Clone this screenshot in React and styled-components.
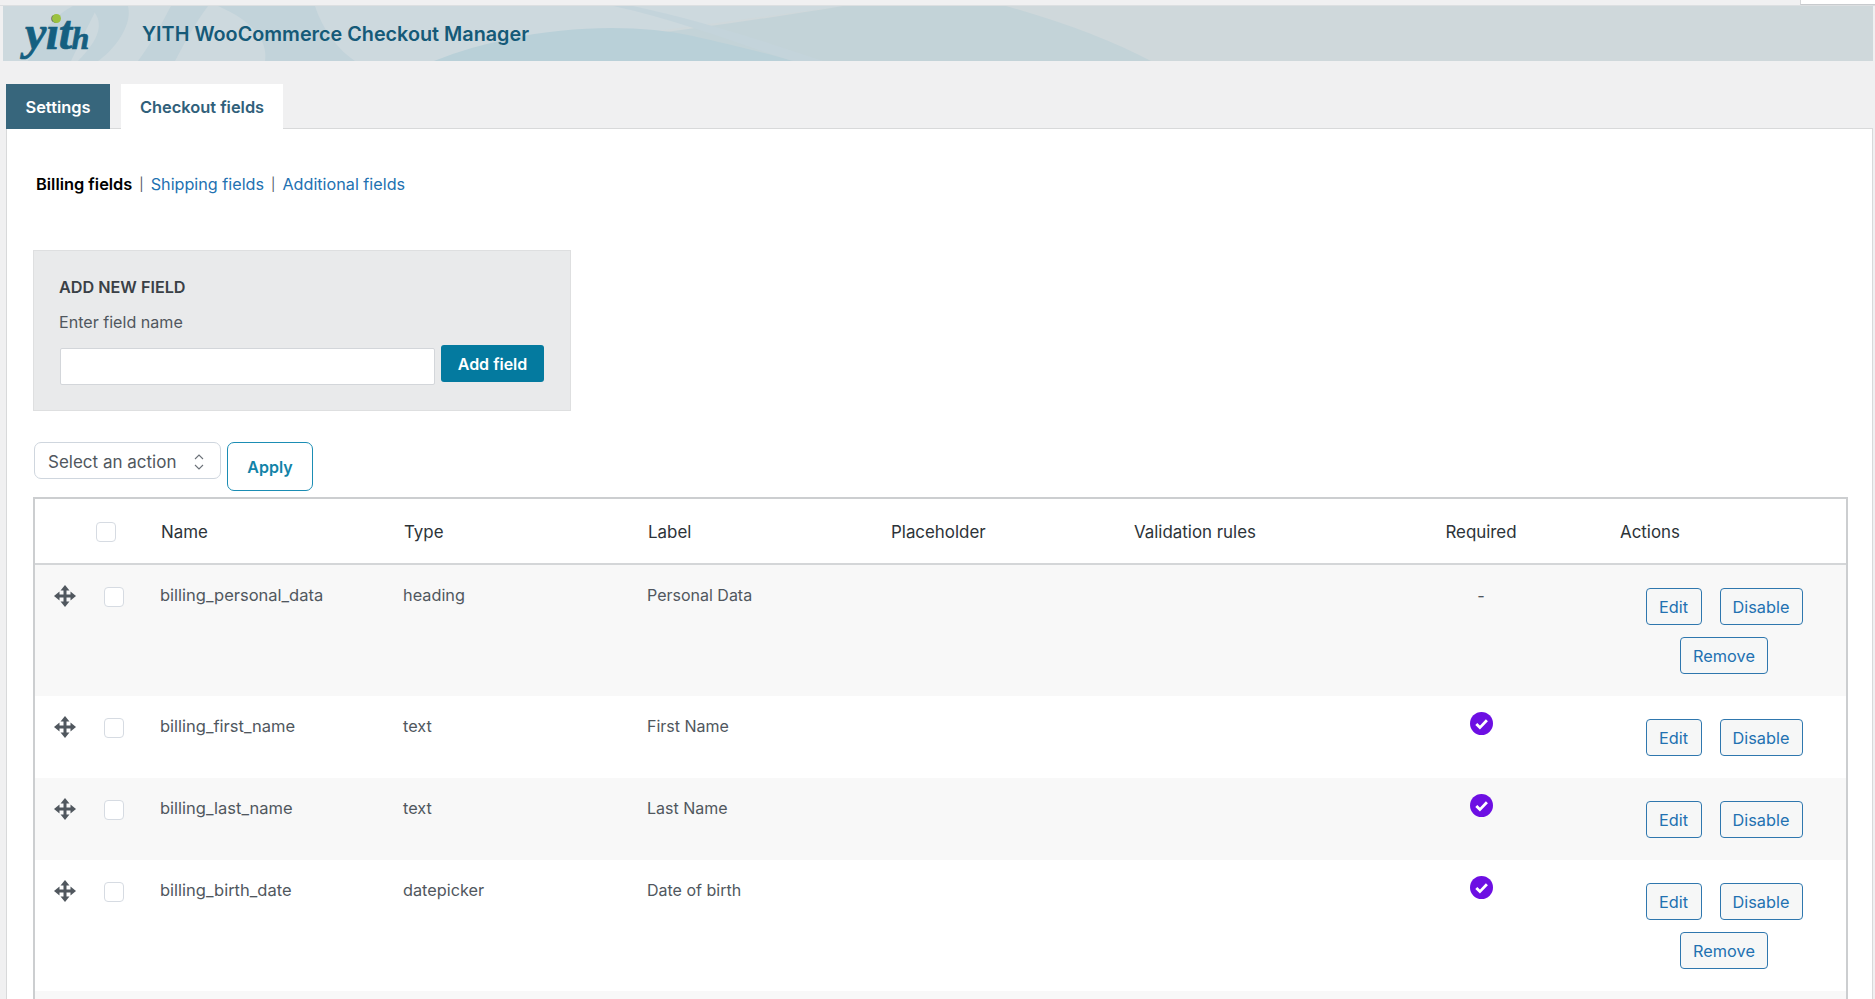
import React from 'react'
import styled, { createGlobalStyle } from 'styled-components'

const GlobalStyle = createGlobalStyle`
  html, body {
    margin: 0;
    height: 999px;
    overflow: hidden;
    background: #f0f0f1;
    font-family: Inter, "Noto Sans", "Liberation Sans", sans-serif;
    font-size: 16.3px;
    color: #50575e;
  }
  * { box-sizing: border-box; }
`

const TopStrip = styled.div`
  height: 6px;
  display: flex;
  justify-content: flex-end;
  border-bottom: 1px solid #dcdfe1;
`

const ScreenOptions = styled.div`
  width: 75px;
  height: 5px;
  background: #fff;
  border-left: 1px solid #d5d7d9;
  border-bottom: 1px solid #c8cbce;
`

const Banner = styled.header`
  position: relative;
  height: 55px;
  margin: 0 2px 0 3px;
  padding-left: 22px;
  display: flex;
  align-items: center;
  overflow: hidden;
  background: #cfd8db;
`

const BannerArt = styled.svg`
  position: absolute;
  inset: 0;
  width: 100%;
  height: 100%;
`

const Logo = styled.div`
  position: relative;
  width: 117px;
  height: 55px;
  padding-top: 3px;
  font-family: "Liberation Serif", serif;
  font-style: italic;
  font-weight: 700;
  font-size: 48px;
  line-height: 48px;
  letter-spacing: -0.5px;
  color: #155f80;
  -webkit-text-stroke: 0.7px #155f80;
`

const LogoSmall = styled.span`
  font-size: 32px;
`

const LogoDot = styled.span`
  position: absolute;
  left: 27px;
  top: 8px;
  width: 9px;
  height: 9px;
  border-radius: 50%;
  background: #9cc13f;
`

const BannerTitle = styled.h1`
  position: relative;
  margin: 0;
  font-size: 19.8px;
  font-weight: 600;
  color: #155a78;
`

const Tabs = styled.nav`
  position: relative;
  z-index: 1;
  margin-top: 23px;
  margin-bottom: -1px;
  padding-left: 6px;
  display: flex;
  gap: 11px;
`

const Tab = styled.a`
  width: ${p => p.$width}px;
  height: 45px;
  display: flex;
  align-items: center;
  justify-content: center;
  font-size: 16.4px;
  font-weight: 600;
  color: ${p => (p.$active ? '#fff' : '#30607a')};
  background: ${p => (p.$active ? '#37667c' : '#fff')};
`

const Panel = styled.main`
  margin: 0 2px 0 6px;
  padding: 44px 24px 0 26px;
  background: #fff;
  border: 1px solid #d8d9da;
  border-bottom: 0;
`

const SubNav = styled.div`
  height: 22px;
  padding-left: 3px;
  display: flex;
  align-items: center;
  gap: 7px;
  font-size: 16.2px;
  line-height: 22px;
`

const SubLink = styled.a`
  color: ${p => (p.$current ? '#000' : '#2271b1')};
  font-weight: ${p => (p.$current ? 600 : 400)};
  font-size: ${p => (p.$current ? '16.4px' : 'inherit')};
`

const Sep = styled.span`
  font-size: 13px;
  color: #50575e;
`

const AddBox = styled.section`
  width: 538px;
  height: 161px;
  margin-top: 55px;
  padding: 26px 0 0 25px;
  background: #e9eaeb;
  border: 1px solid #dedfe0;
`

const AddTitle = styled.h3`
  margin: 0;
  font-size: 16.2px;
  line-height: 20px;
  font-weight: 600;
  color: #3a4046;
`

const AddLabel = styled.div`
  margin-top: 15px;
  font-size: 16.1px;
  line-height: 20px;
`

const AddRow = styled.div`
  margin-top: 13px;
  display: flex;
  align-items: flex-start;
  gap: 6px;
`

const FieldInput = styled.input`
  width: 375px;
  height: 37px;
  margin: 3px 0 0 1px;
  background: #fff;
  border: 1px solid #d3d6da;
  border-radius: 2px;
`

const AddButton = styled.button`
  width: 103px;
  height: 37px;
  border: 0;
  border-radius: 3px;
  background: #047a9f;
  color: #fff;
  font: 600 16px Inter, sans-serif;
`

const Toolbar = styled.div`
  margin-top: 31px;
  display: flex;
  align-items: flex-start;
  gap: 6px;
`

const ActionSelect = styled.div`
  width: 187px;
  height: 37px;
  margin-left: 1px;
  padding: 2px 16px 0 13px;
  display: flex;
  align-items: center;
  justify-content: space-between;
  font-size: 17px;
  background: #fff;
  border: 1px solid #cfd6de;
  border-radius: 7px;
`

const ApplyButton = styled.button`
  width: 86px;
  height: 49px;
  padding-top: 2px;
  background: #fff;
  border: 1.5px solid #1b8db4;
  border-radius: 7px;
  color: #1283a8;
  font: 600 16px Inter, sans-serif;
`

const Table = styled.div`
  margin-top: 6px;
  width: 1815px;
  border: 2px solid #ccced0;
  border-bottom: 0;
  background: #fff;
`

const COLUMNS = '60px 65px 243px 244px 243px 243px 243px 210px 1fr'

const HeadRow = styled.div`
  height: 66px;
  padding-top: 2px;
  display: grid;
  grid-template-columns: ${COLUMNS};
  align-items: center;
  border-bottom: 2px solid #d4d6d8;
  font-size: 16.9px;
  color: #2c3338;
`

const HeadCell = styled.div`
  padding-left: ${p => (p.$center ? 0 : p.$pad || 1)}px;
  text-align: ${p => (p.$center ? 'center' : 'left')};
`

const Row = styled.div`
  display: grid;
  grid-template-columns: ${COLUMNS};
  align-items: start;
  min-height: ${p => (p.$filler ? '30px' : 'auto')};
  background: ${p => (p.$striped ? '#f8f8f8' : '#fff')};
`

const Cell = styled.div`
  padding-top: 20px;
  line-height: 20px;
`

const NameCell = styled(Cell)`
  font-size: 16.5px;
`

const LabelCell = styled(Cell)`
  font-size: 16px;
`

const DragCell = styled.div`
  padding-top: 20px;
  display: flex;
  justify-content: center;
`

const CheckCell = styled.div`
  padding: 22px 0 0 9px;
`

const Box = styled.span`
  display: block;
  width: 20px;
  height: 20px;
  background: #fff;
  border: 1.5px solid #d6dbe2;
  border-radius: 4px;
`

const RequiredCell = styled.div`
  padding-top: 16px;
  display: flex;
  justify-content: center;
`

const Dash = styled.span`
  padding-top: 5px;
  line-height: 20px;
`

const ActionsCell = styled.div`
  padding: 23px 0 22px 16px;
  display: flex;
  flex-wrap: wrap;
  justify-content: center;
  gap: 12px 18px;
`

const RowButton = styled.button`
  height: 37px;
  width: ${p => p.$width}px;
  padding: 0;
  background: #f6f7f7;
  border: 1.5px solid #2f77ae;
  border-radius: 4px;
  color: #2271b1;
  font: 400 16.3px Inter, sans-serif;
`

const MoveIcon = () => (
  <svg width="22" height="22" viewBox="0 0 22 22" fill="#50575e">
    <rect x="9.5" y="3" width="3" height="16" />
    <rect x="3" y="9.5" width="16" height="3" />
    <polygon points="11,0 15.5,5.5 6.5,5.5" />
    <polygon points="11,22 15.5,16.5 6.5,16.5" />
    <polygon points="0,11 5.5,6.5 5.5,15.5" />
    <polygon points="22,11 16.5,6.5 16.5,15.5" />
  </svg>
)

const RequiredIcon = () => (
  <svg width="23" height="23" viewBox="0 0 23 23">
    <circle cx="11.5" cy="11.5" r="11.5" fill="#6d0fe3" />
    <path d="M6.3 12l3.6 3.6 7-7.4" fill="none" stroke="#fff" strokeWidth="2.8" />
  </svg>
)

const UpDownIcon = () => (
  <svg width="10" height="16" viewBox="0 0 10 16" fill="none" stroke="#6b7178" strokeWidth="1.1">
    <path d="M1 5l4-4 4 4" />
    <path d="M1 11l4 4 4-4" />
  </svg>
)

const FIELDS = [
  { name: 'billing_personal_data', type: 'heading', label: 'Personal Data', required: false, removable: true },
  { name: 'billing_first_name', type: 'text', label: 'First Name', required: true },
  { name: 'billing_last_name', type: 'text', label: 'Last Name', required: true },
  { name: 'billing_birth_date', type: 'datepicker', label: 'Date of birth', required: true, removable: true },
]

const App = () => (
  <>
    <GlobalStyle />
    <TopStrip>
      <ScreenOptions />
    </TopStrip>
    <Banner>
      <BannerArt viewBox="0 0 1870 55" preserveAspectRatio="none">
        <rect width="1870" height="55" fill="#cfd8db" />
        <path d="M0 0H840L431 55H0Z" fill="#cdd9de" />
        <path d="M840 0H1003C1060 16 1110 35 1148 55H431C560 40 720 20 840 0Z" fill="#c3d3d8" />
        <path d="M431 55C520 20 620 15 690 30C720 37 760 46 790 55Z" fill="#b9d0d8" />
        <path d="M630 0C700 15 760 35 820 55H790C740 40 680 15 610 0Z" fill="#c4d4db" />
        <path d="M25 55C35 30 50 10 70 0H95C85 20 75 40 68 55Z" fill="#c2d3da" />
        <path d="M85 0H125C130 20 110 45 95 55H75C95 35 105 15 85 0Z" fill="#c2d3da" />
        <path d="M135 55C150 35 160 15 168 0H205C190 20 180 40 172 55Z" fill="#c2d3da" />
        <path d="M215 0H312C318 18 330 40 352 55H262C265 35 250 15 215 0Z" fill="#c2d3da" />
      </BannerArt>
      <Logo>
        yit<LogoSmall>h</LogoSmall>
        <LogoDot />
      </Logo>
      <BannerTitle>YITH WooCommerce Checkout Manager</BannerTitle>
    </Banner>
    <Tabs>
      <Tab $active $width={104}>Settings</Tab>
      <Tab $width={162}>Checkout fields</Tab>
    </Tabs>
    <Panel>
      <SubNav>
        <SubLink $current>Billing fields</SubLink>
        <Sep>|</Sep>
        <SubLink>Shipping fields</SubLink>
        <Sep>|</Sep>
        <SubLink>Additional fields</SubLink>
      </SubNav>
      <AddBox>
        <AddTitle>ADD NEW FIELD</AddTitle>
        <AddLabel>Enter field name</AddLabel>
        <AddRow>
          <FieldInput />
          <AddButton>Add field</AddButton>
        </AddRow>
      </AddBox>
      <Toolbar>
        <ActionSelect>
          Select an action
          <UpDownIcon />
        </ActionSelect>
        <ApplyButton>Apply</ApplyButton>
      </Toolbar>
      <Table>
        <HeadRow>
          <span />
          <HeadCell><Box /></HeadCell>
          <HeadCell>Name</HeadCell>
          <HeadCell>Type</HeadCell>
          <HeadCell>Label</HeadCell>
          <HeadCell>Placeholder</HeadCell>
          <HeadCell>Validation rules</HeadCell>
          <HeadCell $center>Required</HeadCell>
          <HeadCell $pad={34}>Actions</HeadCell>
        </HeadRow>
        {FIELDS.map((field, i) => (
          <Row key={field.name} $striped={i % 2 === 0}>
            <DragCell><MoveIcon /></DragCell>
            <CheckCell><Box /></CheckCell>
            <NameCell>{field.name}</NameCell>
            <Cell>{field.type}</Cell>
            <LabelCell>{field.label}</LabelCell>
            <Cell />
            <Cell />
            <RequiredCell>
              {field.required ? <RequiredIcon /> : <Dash>-</Dash>}
            </RequiredCell>
            <ActionsCell>
              <RowButton $width={56}>Edit</RowButton>
              <RowButton $width={83}>Disable</RowButton>
              {field.removable && <RowButton $width={88}>Remove</RowButton>}
            </ActionsCell>
          </Row>
        ))}
        <Row $striped $filler />
      </Table>
    </Panel>
  </>
)

export default App
